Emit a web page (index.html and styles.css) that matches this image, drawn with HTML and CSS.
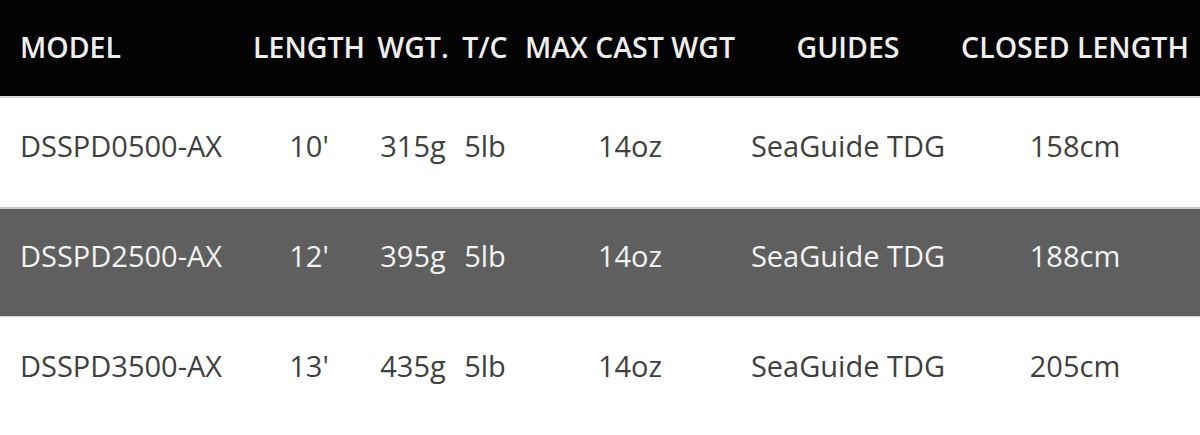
FILE: index.html
```html
<!DOCTYPE html>
<html lang="en">
<head>
<meta charset="utf-8">
<title>Rod specifications</title>
<link rel="stylesheet" href="styles.css">
</head>
<body>
<div class="spec-table">
  <div class="row head">
    <div class="cell model">MODEL</div>
    <div class="cell">LENGTH</div>
    <div class="cell">WGT.</div>
    <div class="cell">T/C</div>
    <div class="cell">MAX CAST WGT</div>
    <div class="cell">GUIDES</div>
    <div class="cell">CLOSED LENGTH</div>
  </div>
  <div class="row light">
    <div class="cell model">DSSPD0500-AX</div>
    <div class="cell">10'</div>
    <div class="cell">315g</div>
    <div class="cell">5lb</div>
    <div class="cell">14oz</div>
    <div class="cell">SeaGuide TDG</div>
    <div class="cell">158cm</div>
  </div>
  <div class="row dark">
    <div class="cell model">DSSPD2500-AX</div>
    <div class="cell">12'</div>
    <div class="cell">395g</div>
    <div class="cell">5lb</div>
    <div class="cell">14oz</div>
    <div class="cell">SeaGuide TDG</div>
    <div class="cell">188cm</div>
  </div>
  <div class="row light">
    <div class="cell model">DSSPD3500-AX</div>
    <div class="cell">13'</div>
    <div class="cell">435g</div>
    <div class="cell">5lb</div>
    <div class="cell">14oz</div>
    <div class="cell">SeaGuide TDG</div>
    <div class="cell">205cm</div>
  </div>
</div>
</body>
</html>
```

FILE: styles.css
```css
html, body {
  margin: 0;
  padding: 0;
  background: #ffffff;
}

body {
  font-family: "Open Sans", "DejaVu Sans", sans-serif;
  font-size: 29px;
  line-height: 1;
  color: #404040;
}

.spec-table {
  width: 1200px;
}

.row {
  display: grid;
  grid-template-columns: 248px 122px 86px 58px 232px 204px 250px;
  align-items: center;
  height: 110px;
  box-sizing: border-box;
  border-top: 1px solid #d4d4d4;
  padding-bottom: 14px;
}

.row.head {
  background: #030303;
  color: #eeeeee;
  border-top: none;
  padding-bottom: 2px;
  border-bottom: 1px solid #dcdcdc;
  height: 97px;
  font-size: 28.5px;
  font-weight: 600;
}

.row.light {
  background: #ffffff;
}

.row.dark {
  background: #5f5f5f;
  color: #f2f2f2;
  border-top: 2px solid #c8c8c8;
  border-bottom: 1px solid #cfcfcf;
  height: 110px;
}

.row.dark + .row {
  border-top: none;
}

.cell {
  text-align: center;
  white-space: nowrap;
}

.cell.model {
  text-align: left;
  padding-left: 20px;
}
```
